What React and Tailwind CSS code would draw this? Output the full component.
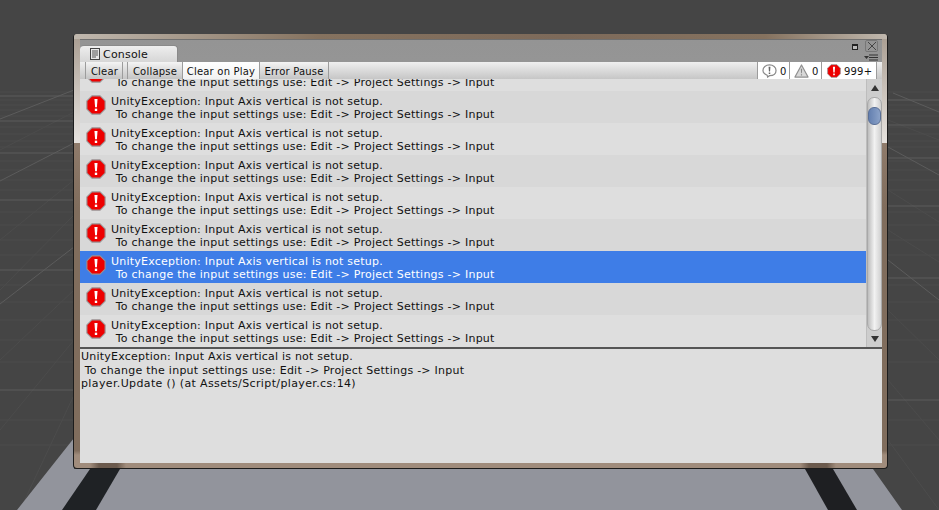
const rows = [1, 2, 3, 4, 5, 6, 7, 8];

const gridMajor = [
  "M0 96 H74", "M0 121 H74", "M0 153 H74", "M0 200 H74", "M0 270 H74", "M0 390 H74",
  "M0 119 L74 90", "M0 181 L74 143", "M0 304 L74 247",
  "M888 100 H939", "M888 125 H939", "M888 158 H939", "M888 206 H939", "M888 278 H939", "M888 400 H939",
  "M893 93 L939 112", "M888 147 L939 175", "M888 260 L939 300",
];
const gridMinorY = [92, 100, 105, 110, 116, 127, 134, 141, 147, 161, 170, 180, 190, 212, 225, 240, 255, 285, 302, 320, 340, 362, 420, 445];
const gridMinorDiag = [
  "M0 150 L74 112", "M0 240 L74 180", "M0 360 L74 290", "M0 430 L74 340", "M20 510 L74 395", "M0 290 L74 215",
  "M888 120 L939 140", "M888 190 L939 222", "M888 230 L939 262", "M888 310 L939 360", "M888 380 L939 440", "M888 440 L939 510",
];

// red octagon error icon, same drawing in rows and toolbar
const ErrorIcon = ({ className }) => (
  <svg viewBox="0 0 22 22" className={className}>
    <path d="M6.5 1 H15.5 L21 6.5 V15.5 L15.5 21 H6.5 L1 15.5 V6.5 Z" fill="#ee0000" stroke="#9a8f90" strokeWidth="1.2" strokeLinejoin="round" />
    <path d="M9.3 4.5 H12.7 L12 13.5 H10 Z" fill="#fff" />
    <rect x="9.7" y="15" width="2.6" height="2.6" fill="#fff" />
  </svg>
);

const SceneBackground = () => (
  <svg viewBox="0 0 939 510" className="absolute inset-0 w-[939px] h-[510px]">
    <rect width="939" height="510" fill="#454545" />
    <g stroke="#4c4c4c" strokeWidth="1" fill="none">
      {gridMinorY.map((y) => (
        <path key={y} d={`M0 ${y} H939`} />
      ))}
      {gridMinorDiag.map((d) => (
        <path key={d} d={d} />
      ))}
    </g>
    <g stroke="#5c5c5c" strokeWidth="1" fill="none">
      {gridMajor.map((d) => (
        <path key={d} d={d} />
      ))}
    </g>
    <path d="M74 438 L74 469 L873 469 L902 510 L17 510 Z" fill="#92949c" />
    <path d="M90 469 L120 469 L96 510 L62 510 Z" fill="#1f2225" />
    <path d="M805 469 L833 469 L857 510 L828 510 Z" fill="#1e1f22" />
  </svg>
);

const ToolbarButton = ({ label, active, className = "" }) => (
  <div
    className={`h-[17px] flex items-center justify-center pt-[2px] whitespace-nowrap border-r border-[#9c9c9c] ${
      active
        ? "bg-gradient-to-b from-[#ffffff] to-[#f2f2f2]"
        : "bg-gradient-to-b from-[#f4f4f4] to-[#c4c4c4]"
    } ${className}`}
  >
    {label}
  </div>
);

const LogRow = ({ index }) => {
  const selected = index === 6;
  const bg = selected ? "bg-[#3e7de7] text-white" : index % 2 === 0 ? "bg-[#dedede]" : "bg-[#d8d8d8]";
  return (
    <div className={`h-[32px] flex shrink-0 ${bg}`}>
      <div className="w-[31px] shrink-0 pl-[6px] pt-[4px]">
        <ErrorIcon className="w-[20px] h-[20px]" />
      </div>
      <div className="leading-[13px] pt-[4px] whitespace-pre tracking-[0.22px]">
        <div>UnityException: Input Axis vertical is not setup.</div>
        <div className="pl-[1px] tracking-[0.24px]"> To change the input settings use: Edit -&gt; Project Settings -&gt; Input</div>
      </div>
    </div>
  );
};

// row scrolled mostly out of view at the top of the list
const ClippedRow = () => (
  <div className="h-[12px] flex shrink-0 overflow-hidden bg-[#dedede]">
    <div className="w-[31px] shrink-0 pl-[6px] -mt-[16px]">
      <ErrorIcon className="w-[20px] h-[20px]" />
    </div>
    <div className="leading-[13px] -mt-[3px] pl-[1px] whitespace-pre tracking-[0.24px]">
      {" To change the input settings use: Edit -> Project Settings -> Input"}
    </div>
  </div>
);

const App = () => {
  return (
    <div className="relative w-[939px] h-[510px] overflow-hidden font-['DejaVu_Sans',sans-serif] text-[11px] text-[#111]">
      <SceneBackground />
      {/* Console window */}
      <div className="absolute left-[73px] top-[34px] w-[815px] h-[435px] rounded-[4px] pl-[6px] pr-[5px] pt-[5px] pb-[5px] border-b border-r border-l border-[#1c1c1c] bg-[linear-gradient(180deg,#a89c90_0%,#c8c0b8_12%,#e6e2de_25%,#8f7b6b_25.2%,#806d5d_40%,#806d5d_96%,#a08c7c_97%)]">
        {/* frame sheen along the top edge */}
        <div className="absolute left-0 right-0 top-0 h-[5px] rounded-t-[3px] bg-[linear-gradient(90deg,#c0b8ae,#85725f_30%,#7d6a5a_60%,#85725f_85%,#c0b8ae)]" />
        <div className="w-full h-full flex flex-col bg-gradient-to-b from-[#949494] to-[#a8a8a8] border-t border-[#707070]">
          {/* Tab strip */}
          <div className="h-[22px] shrink-0 flex items-end justify-between relative">
            <div className="w-[98px] h-[17px] rounded-t-[4px] bg-gradient-to-b from-[#eeeeee] to-[#d6d6d6] border-t border-r border-[#8a8a8a] flex items-center pl-[10px] pt-[2px] gap-[3px] tracking-[0.2px]">
              <svg viewBox="0 0 10 12" className="w-[10px] h-[12px] -mt-[2px]">
                <rect x="0.5" y="0.5" width="9" height="11" fill="#e8e8e8" stroke="#444" />
                <path d="M2 3 H8 M2 5 H8 M2 7 H8 M2 9 H6" stroke="#555" />
              </svg>
              Console
            </div>
            <div className="absolute right-[4px] top-[0px] flex items-start gap-[7px]">
              <div className="mt-[4px] w-[6px] h-[6px] border border-[#222] border-t-2 bg-[#bbb]" />
              <div className="w-[13px] h-[12px] border border-[#777] rounded-[2px] flex items-center justify-center">
                <svg viewBox="0 0 10 10" className="w-[10px] h-[10px]">
                  <path d="M1 1 L9 9 M9 1 L1 9" stroke="#444" strokeWidth="1" />
                </svg>
              </div>
            </div>
            <svg viewBox="0 0 14 7" className="absolute right-[4px] bottom-[1px] w-[14px] h-[7px]">
              <path d="M0 2 H5 L2.5 5 Z" fill="#333" />
              <path d="M5 1 H14 M5 3.5 H14 M5 6 H14" stroke="#333" />
            </svg>
          </div>
          {/* Toolbar */}
          <div className="h-[17px] shrink-0 flex bg-gradient-to-b from-[#f0f0f0] to-[#c6c6c6] text-[10px] tracking-[0.2px]">
            <div className="w-[5px]" />
            <ToolbarButton label="Clear" className="w-[38px] border-l pl-[1px]" />
            <div className="w-[5px] border-r border-[#9c9c9c]" />
            <ToolbarButton label="Collapse" className="w-[55px]" />
            <ToolbarButton label="Clear on Play" active className="w-[77px]" />
            <ToolbarButton label="Error Pause" className="w-[69px]" />
            <div className="flex-1" />
            <div className="h-[17px] w-[33px] flex items-center gap-[3px] pl-[4px] bg-white border-x border-[#9c9c9c]">
              <svg viewBox="0 0 16 15" className="w-[15px] h-[14px]">
                <path d="M8 1 C12 1 15 3.5 15 7 C15 10.5 12 12.5 8 12.5 L6 14 L5.5 12 C3 11 1 9.5 1 7 C1 3.5 4 1 8 1 Z" fill="#fff" stroke="#8a8a8a" strokeWidth="1.3" />
                <path d="M7 3 H9 L8.6 8 H7.4 Z M7.2 9 H8.8 V10.6 H7.2 Z" fill="#666" />
              </svg>
              <span className="pt-[2px]">0</span>
            </div>
            <div className="h-[17px] w-[32px] flex items-center gap-[3px] pl-[4px] bg-white border-r border-[#9c9c9c]">
              <svg viewBox="0 0 16 15" className="w-[15px] h-[14px]">
                <path d="M8 1 L15 14 H1 Z" fill="#d8d8d8" stroke="#909090" strokeWidth="1.3" strokeLinejoin="round" />
                <path d="M7.3 5 H8.7 L8.4 10 H7.6 Z M7.4 11 H8.6 V12.3 H7.4 Z" fill="#888" />
              </svg>
              <span className="pt-[2px]">0</span>
            </div>
            <div className="h-[17px] w-[55px] flex items-center gap-[3px] pl-[5px] bg-white border-r border-[#9c9c9c] mr-[5px]">
              <ErrorIcon className="w-[14px] h-[14px]" />
              <span className="pt-[2px]">999+</span>
            </div>
          </div>
          {/* Log list */}
          <div className="h-[270px] shrink-0 flex border-b-2 border-[#555]">
            <div className="flex-1 overflow-hidden flex flex-col">
              <ClippedRow />
              {rows.map((i) => (
                <LogRow key={i} index={i} />
              ))}
            </div>
            <div className="w-[16px] shrink-0 flex flex-col bg-[#cdcdcd] border-l border-[#bdbdbd] items-center">
              <div className="h-[18px] w-full flex items-center justify-center">
                <svg viewBox="0 0 8 6" className="w-[8px] h-[6px]"><path d="M4 0 L8 6 H0 Z" fill="#333" /></svg>
              </div>
              <div className="flex-1 w-[15px] rounded-[7px] bg-gradient-to-r from-[#bdbdbd] via-[#f2f2f2] to-[#d0d0d0] border border-[#a8a8a8] pt-[9px]">
                <div className="h-[18px] w-[13px] rounded-[6px] border border-[#5a6f96] bg-gradient-to-r from-[#6480b0] to-[#8ba2c8]" />
              </div>
              <div className="h-[16px] w-full flex items-center justify-center">
                <svg viewBox="0 0 8 6" className="w-[8px] h-[6px]"><path d="M0 0 H8 L4 6 Z" fill="#333" /></svg>
              </div>
            </div>
          </div>
          {/* Detail pane */}
          <div className="flex-1 bg-[#dedede] pl-[1px] pt-[1px] leading-[13.5px] whitespace-pre tracking-[0.22px]">
            <div>UnityException: Input Axis vertical is not setup.</div>
            <div className="tracking-[0.25px]"> To change the input settings use: Edit -&gt; Project Settings -&gt; Input</div>
            <div className="tracking-[0.37px]">player.Update () (at Assets/Script/player.cs:14)</div>
          </div>
        </div>
        {/* see-through frame picks up the dark stripes of the floor */}
        <div className="absolute left-[16px] bottom-0 w-[36px] h-[5px] bg-[linear-gradient(90deg,#a08c7c,#6b5a4d_25%,#6b5a4d_75%,#a08c7c)]" />
        <div className="absolute left-[726px] bottom-0 w-[36px] h-[5px] bg-[linear-gradient(90deg,#a08c7c,#6b5a4d_25%,#6b5a4d_75%,#a08c7c)]" />
      </div>
    </div>
  );
};

export default App;
